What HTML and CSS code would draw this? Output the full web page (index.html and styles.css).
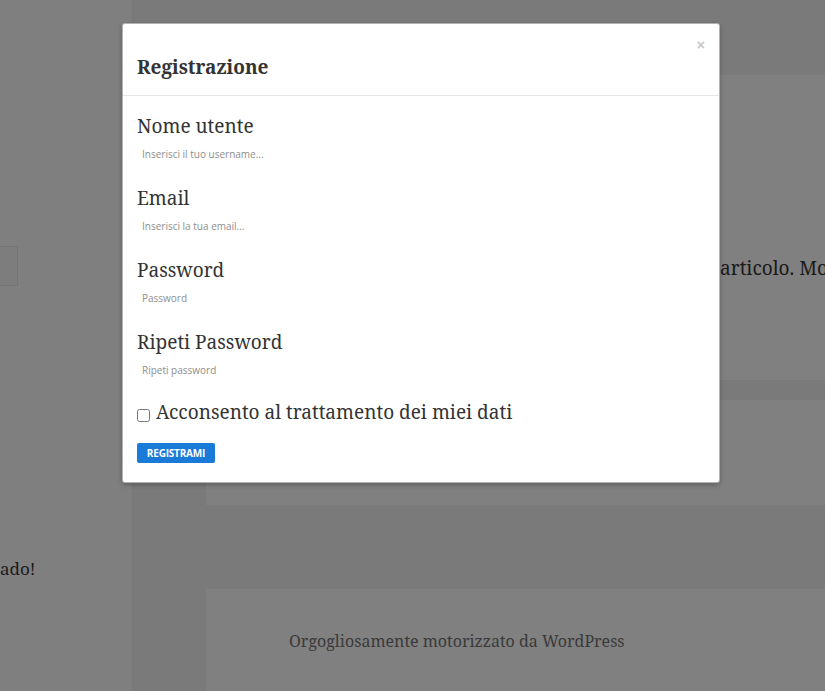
FILE: index.html
```html
<!DOCTYPE html>
<html lang="it">
<head>
<meta charset="utf-8">
<title>Registrazione</title>
<link rel="stylesheet" href="styles.css">
</head>
<body>
<div class="page">
  <aside class="sidebar">
    <div class="search-box"></div>
    <p class="widget-text">ado!</p>
  </aside>
  <main class="main">
    <div class="top-band"></div>
    <div class="content">
      <article class="post post-a">
        <p class="post-text">articolo. Mo</p>
      </article>
      <article class="post post-b"></article>
      <footer class="site-footer">
        <p class="footer-text">Orgogliosamente motorizzato da WordPress</p>
      </footer>
    </div>
  </main>
</div>

<div class="modal">
  <div class="modal-header">
    <button class="close" type="button">×</button>
    <h4 class="modal-title">Registrazione</h4>
  </div>
  <form class="modal-body">
    <div class="field">
      <label class="field-label">Nome utente</label>
      <input class="field-input" type="text" placeholder="Inserisci il tuo username...">
    </div>
    <div class="field">
      <label class="field-label">Email</label>
      <input class="field-input" type="text" placeholder="Inserisci la tua email...">
    </div>
    <div class="field">
      <label class="field-label">Password</label>
      <input class="field-input" type="password" placeholder="Password">
    </div>
    <div class="field">
      <label class="field-label">Ripeti Password</label>
      <input class="field-input" type="password" placeholder="Ripeti password">
    </div>
    <label class="consent"><input class="consent-box" type="checkbox"><span>Acconsento al trattamento dei miei dati</span></label>
    <div class="actions">
      <button class="btn-primary" type="button">REGISTRAMI</button>
    </div>
  </form>
</div>
</body>
</html>
```
FILE: styles.css
```css
* { box-sizing: border-box; }
html, body { margin: 0; padding: 0; }
body {
  width: 825px;
  height: 691px;
  overflow: hidden;
  background: #7a7a7a;
  font-family: "Noto Serif", "DejaVu Serif", serif;
  position: relative;
}
.page {
  display: flex;
  height: 691px;
}
.sidebar {
  width: 133px;
  flex: none;
  background: #7f7f7f;
  border-right: 1px solid #777;
  padding-top: 246px;
}
.search-box {
  width: 18px;
  height: 40px;
  border: 1px solid #757575;
  border-left: none;
  background: #7d7d7d;
}
.widget-text {
  margin: 271px 0 0 0;
  font-size: 17px;
  line-height: 24px;
  color: #1a1a1a;
}
.main {
  flex: 1;
  display: flex;
  flex-direction: column;
}
.top-band { height: 75px; flex: none; }
.content {
  padding-left: 73px;
  display: flex;
  flex-direction: column;
}
.post {
  background: #808080;
}
.post-a {
  height: 305px;
  padding: 180px 0 0 514px;
  white-space: nowrap;
  overflow: hidden;
}
.post-text {
  margin: 0;
  font-size: 19px;
  line-height: 26px;
  color: #1a1a1a;
}
.post-b {
  margin-top: 19px;
  height: 106px;
  border-top: 1px solid #7b7b7b;
}
.site-footer {
  margin-top: 83px;
  height: 110px;
  background: #808080;
  border-top: 1px solid #7b7b7b;
  padding: 40px 0 0 83px;
}
.footer-text {
  margin: 0;
  font-size: 16px;
  line-height: 24px;
  color: #3a3a3a;
}

/* modal */
.modal {
  position: absolute;
  left: 122px;
  top: 23px;
  width: 598px;
  background: #fff;
  border: 1px solid rgba(0,0,0,.3);
  border-radius: 3px;
  box-shadow: 0 2px 5px rgba(0,0,0,.25);
}
.modal-header {
  display: flex;
  flex-direction: column;
  padding: 12px 14px 15px 14px;
  border-bottom: 1px solid #e5e5e5;
}
.close {
  align-self: flex-end;
  border: none;
  background: none;
  padding: 0;
  font-family: "Liberation Sans", Arial, sans-serif;
  font-size: 14px;
  font-weight: bold;
  line-height: 18px;
  color: #c8c8c8;
}
.modal-title {
  margin: 0;
  font-size: 19px;
  font-weight: bold;
  line-height: 26px;
  color: #333;
}
.modal-body {
  display: flex;
  flex-direction: column;
  padding: 15px 14px 19px 14px;
  margin: 0;
}
.field {
  display: flex;
  flex-direction: column;
  margin-bottom: 16px;
}
.field-label {
  font-size: 19px;
  line-height: 30px;
  color: #333;
}
.field-input {
  height: 26px;
  border: none;
  outline: none;
  padding: 0 5px;
  font-family: "Open Sans", "Noto Sans", sans-serif;
  font-size: 10px;
  color: #333;
  background: #fff;
}
.field-input::placeholder { color: #8e8e8e; }
.consent {
  display: flex;
  align-items: center;
  margin-top: -2px;
  font-size: 19px;
  line-height: 30px;
  color: #333;
}
.consent-box {
  width: 13px;
  height: 13px;
  margin: 6px 6px 0 0;
}
.actions { margin-top: 16px; display: flex; }
.btn-primary {
  height: 20px;
  width: 78px;
  padding: 0;
  border: none;
  border-radius: 2px;
  background: #1a7ad8;
  color: #fff;
  font-family: "Open Sans", "Noto Sans", sans-serif;
  font-size: 10px;
  font-weight: 700;
  letter-spacing: -0.2px;
}
```
